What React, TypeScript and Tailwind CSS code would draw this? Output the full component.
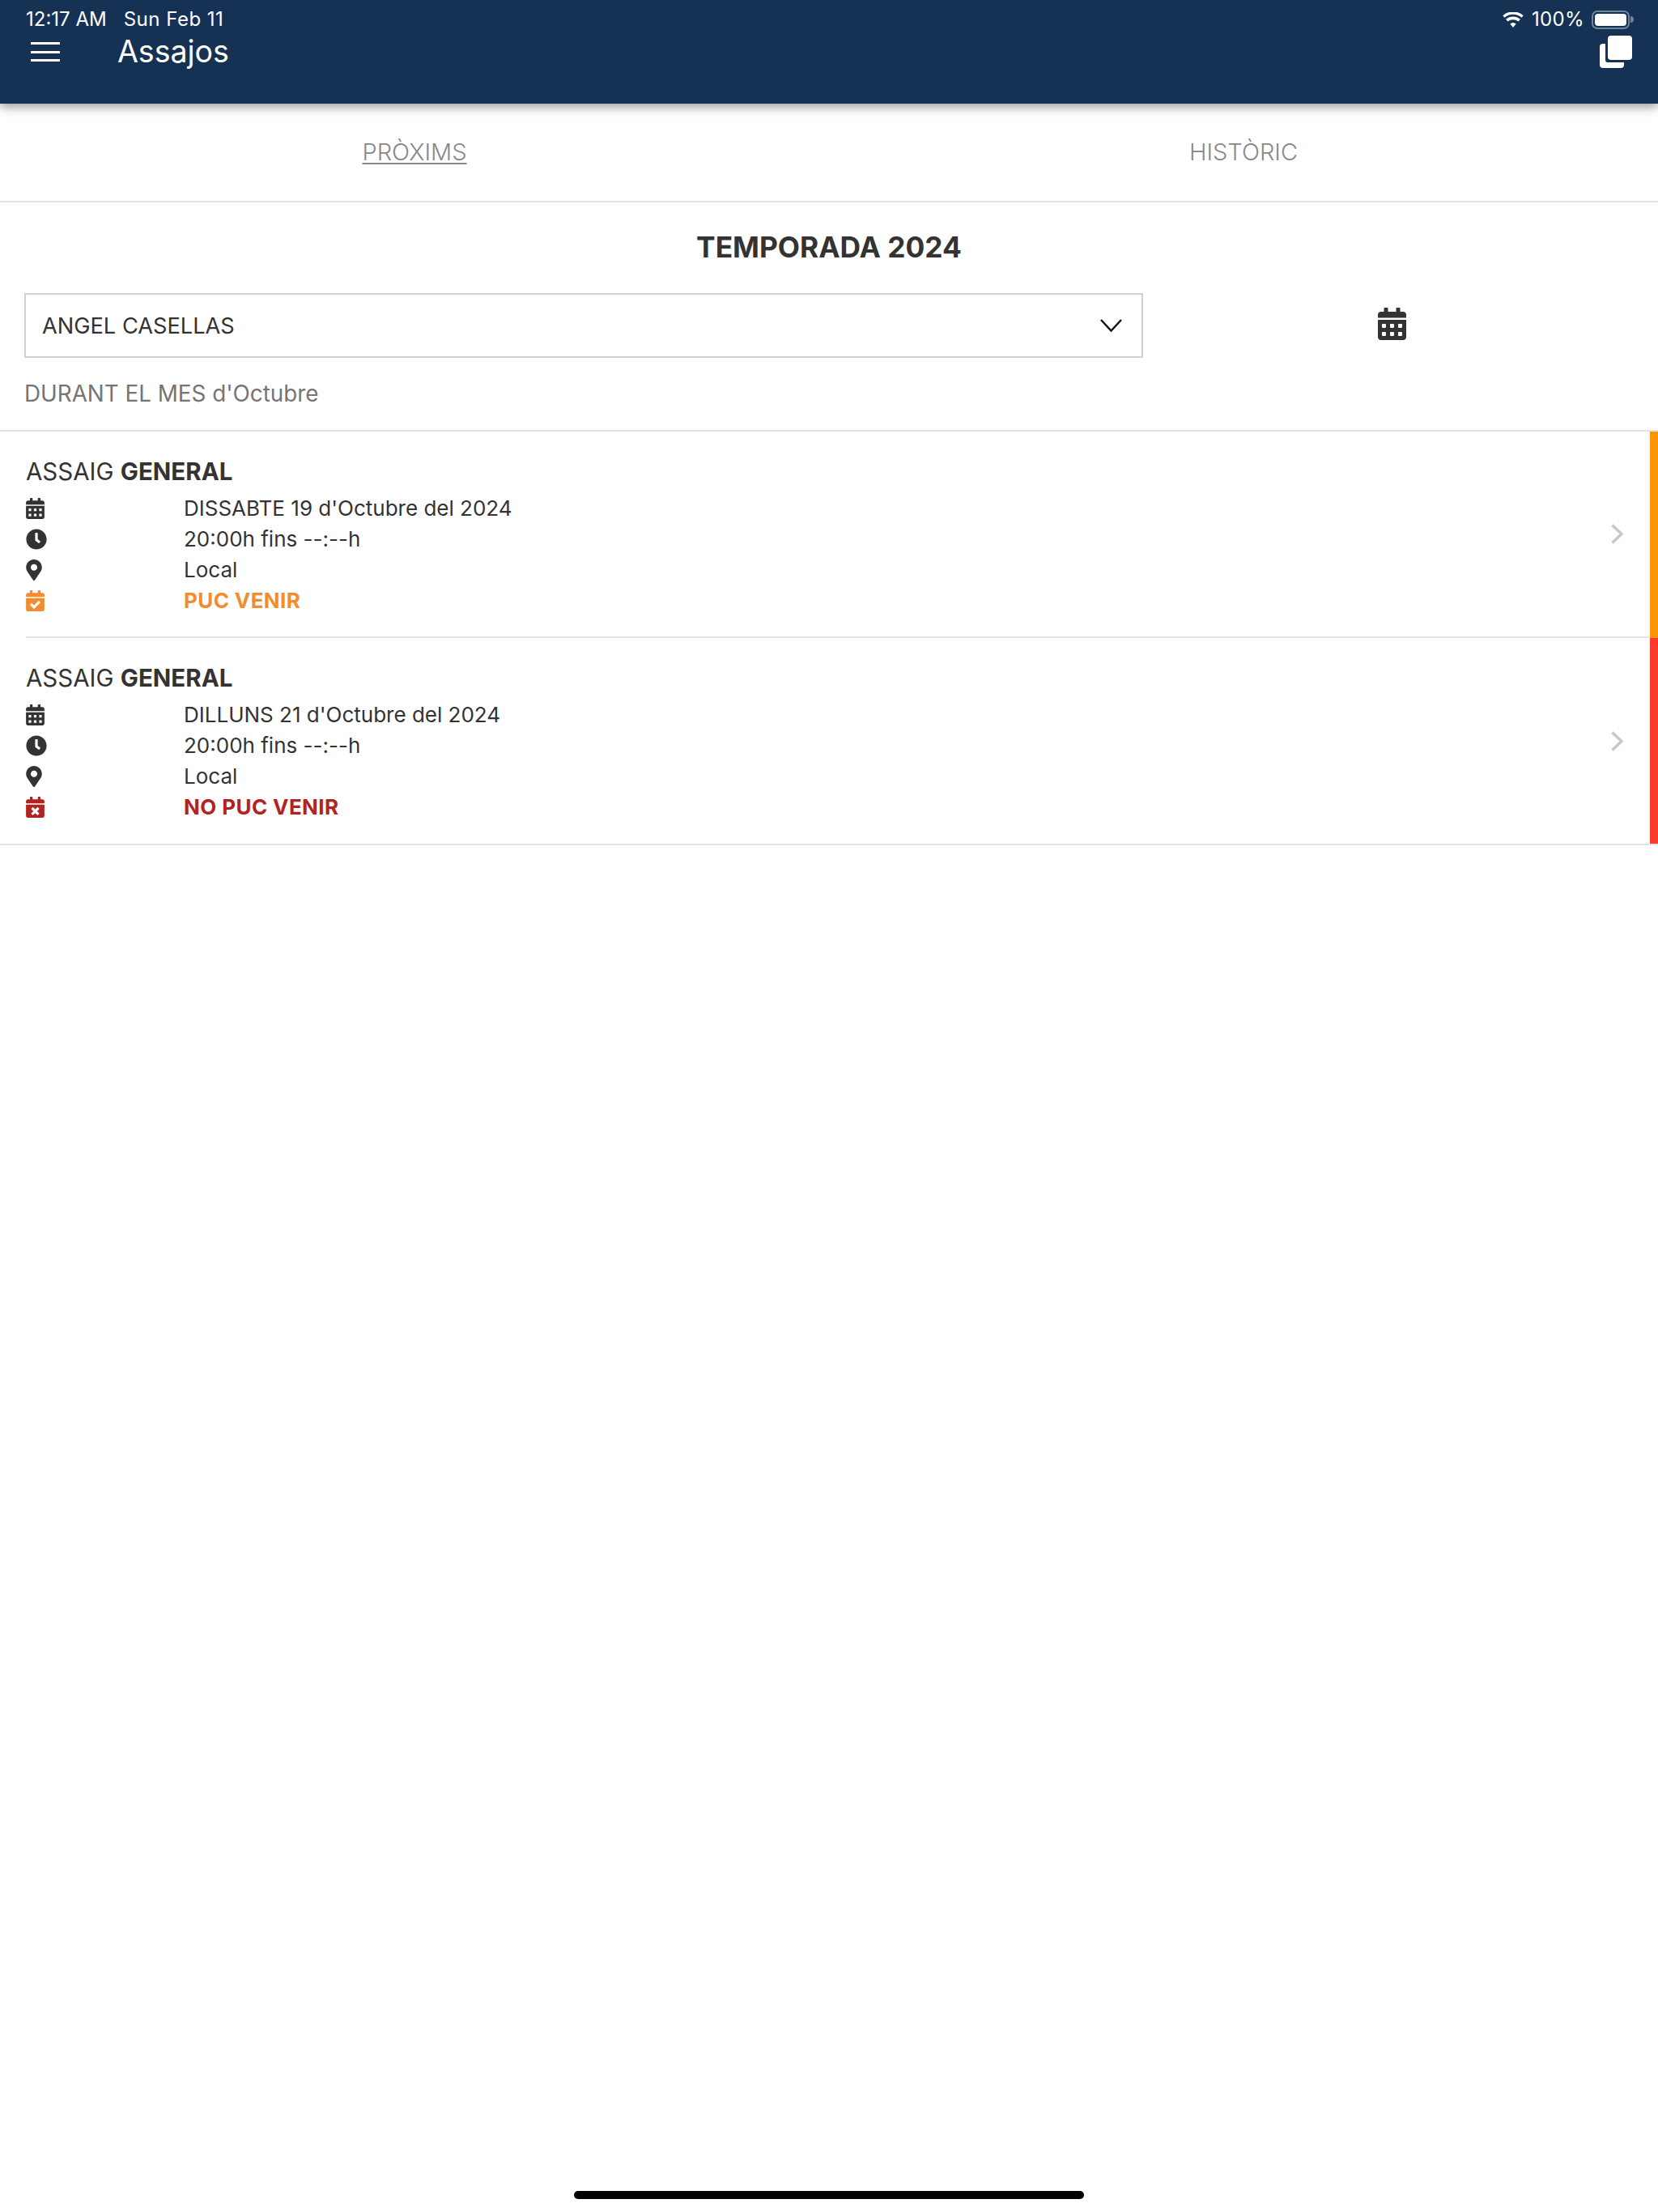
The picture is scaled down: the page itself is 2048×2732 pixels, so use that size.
import { FaCalendarAlt, FaCalendarCheck, FaCalendarTimes, FaClock, FaMapMarkerAlt } from 'react-icons/fa';

type Row = { date: string; status: string; tone: string; bar: string; yes: boolean; last?: boolean };

const ROWS: Row[] = [
  { date: "DISSABTE 19 d'Octubre del 2024", status: 'PUC VENIR', tone: 'text-[#f28c2e]', bar: 'bg-[#ff9500]', yes: true },
  { date: "DILLUNS 21 d'Octubre del 2024", status: 'NO PUC VENIR', tone: 'text-[#b22222]', bar: 'bg-[#ff3b30]', yes: false, last: true },
];

function RehearsalRow({ row }: { row: Row }) {
  const StatusIcon = row.yes ? FaCalendarCheck : FaCalendarTimes;
  return (
    <div className={`relative ${row.last ? 'h-[256px] border-b-2 border-[#e4e4e4]' : 'h-[255px] pl-[32px]'}`}>
      <div className={`flex h-full items-center ${row.last ? 'pl-[32px]' : 'border-b-2 border-[#e4e4e4]'}`}>
        <div className="flex-1 pt-[4px]">
          <div className="text-[29.500px] leading-[38px] text-[#333]">
            ASSAIG <span className="font-bold">GENERAL</span>
          </div>
          <div className="mt-[8px] grid grid-cols-[195px_1fr] items-center text-[26px] leading-[38px] text-[#333]">
            <FaCalendarAlt className="h-[26px] w-[23px]" />
            <span>{row.date}</span>
            <FaClock className="h-[26px] w-[26px]" />
            <span>20:00h fins --:--h</span>
            <FaMapMarkerAlt className="h-[26px] w-[20px]" />
            <span>Local</span>
            <StatusIcon className={`h-[26px] w-[23px] ${row.tone}`} />
            <span className={`font-bold tracking-[0.4px] ${row.tone}`}>{row.status}</span>
          </div>
        </div>
        <svg viewBox="0 0 15 25" width={15} height={25} fill="none" stroke="#c7c7cc" strokeWidth={3.5} className="mr-[43px]">
          <path d="M1.500 1.500 13 12.500 1.500 23.500" />
        </svg>
      </div>
      <div className={`absolute top-0 right-0 bottom-0 w-[10px] ${row.bar}`} />
    </div>
  );
}

export default function App() {
  return (
    <div className="relative flex h-[2732px] w-[2048px] flex-col bg-white font-['Inter',sans-serif]">
      <header className="relative h-[128px] bg-[#153255] px-[32px] pt-[9px] text-white shadow-[0_4px_12px_rgba(0,0,0,0.4)]">
        <div className="flex h-[30px] items-center justify-between text-[24px] leading-[30px]">
          <div className="flex">
            <span>12:17 AM</span>
            <span className="ml-[21px] tracking-[0.5px]">Sun Feb 11</span>
          </div>
          <div className="-mr-[2px] flex items-center">
            <svg viewBox="0 0 24 18" width={28} height={19} fill="currentColor">
              <path d="M12 18 8.500 13.800a5 5 0 0 1 7 0zM5.800 11 3.500 8.300a13 13 0 0 1 17 0L18.200 11a9.500 9.500 0 0 0-12.400 0zM2 6.400 0 4a18 18 0 0 1 24 0l-2 2.400a15 15 0 0 0-20 0z" />
            </svg>
            <span className="ml-[9px] w-[74px] tracking-[0.3px]">100%</span>
            <span className="flex h-[23px] w-[47px] rounded-[7px] border-2 border-white/40 p-[2px]">
              <span className="flex-1 rounded-[4px] bg-white" />
            </span>
            <span className="ml-[1px] h-[8px] w-[4px] rounded-r-full bg-white/40" />
          </div>
        </div>
        <div className="-mt-[1px] flex h-[52px] items-center justify-between">
          <div className="flex items-center">
            <div className="ml-[6px] flex h-[24px] w-[36px] flex-col justify-between">
              <span className="h-[3px] bg-white" />
              <span className="h-[3px] bg-white" />
              <span className="h-[3px] bg-white" />
            </div>
            <h1 className="ml-[71px] text-[37.500px] leading-[48px]">Assajos</h1>
          </div>
          <svg viewBox="0 0 40 40" width={40} height={40} fill="currentColor">
            <rect x="10" y="0" width="30" height="30" rx="4" />
            <path d="M7 10v20a3 3 0 0 0 3 3h20v3a4 4 0 0 1-4 4H4a4 4 0 0 1-4-4V14a4 4 0 0 1 4-4z" />
          </svg>
        </div>
      </header>

      <nav className="grid h-[122px] grid-cols-2 items-center border-b-2 border-[#e3e3e3] text-center text-[29px] font-light text-[#888]">
        <span className="underline decoration-2 underline-offset-[3px]">PRÒXIMS</span>
        <span>HISTÒRIC</span>
      </nav>

      <h2 className="mt-[33px] text-center text-[35.300px] leading-[46px] font-bold text-[#333]">TEMPORADA 2024</h2>

      <div className="mt-[33px] flex items-center pl-[30px]">
        <div className="flex h-[80px] w-[1382px] items-center justify-between border-2 border-[#d2d2d2] px-[20px] text-[27.200px] text-[#333]">
          <span className="pt-[2px]">ANGEL CASELLAS</span>
          <svg viewBox="0 0 27 16" width={27} height={16} fill="none" stroke="#111" strokeWidth={2.500} className="mr-[4px]">
            <path d="M1 1 13.500 14.500 26 1" />
          </svg>
        </div>
        <div className="flex flex-1 justify-center pr-[21px] text-[#333]">
          <FaCalendarAlt className="-mt-[4px] h-[40px] w-[35px]" />
        </div>
      </div>

      <p className="mt-[27px] pl-[30px] text-[27.800px] leading-[34px] text-[#757575]">DURANT EL MES d'Octubre</p>

      <div className="mt-[28px] border-t-2 border-[#e4e4e4]">
        {ROWS.map((r) => (
          <RehearsalRow key={r.date} row={r} />
        ))}
      </div>

      <div className="absolute bottom-[16px] left-1/2 h-[10px] w-[630px] -translate-x-1/2 rounded-full bg-black" />
    </div>
  );
}
